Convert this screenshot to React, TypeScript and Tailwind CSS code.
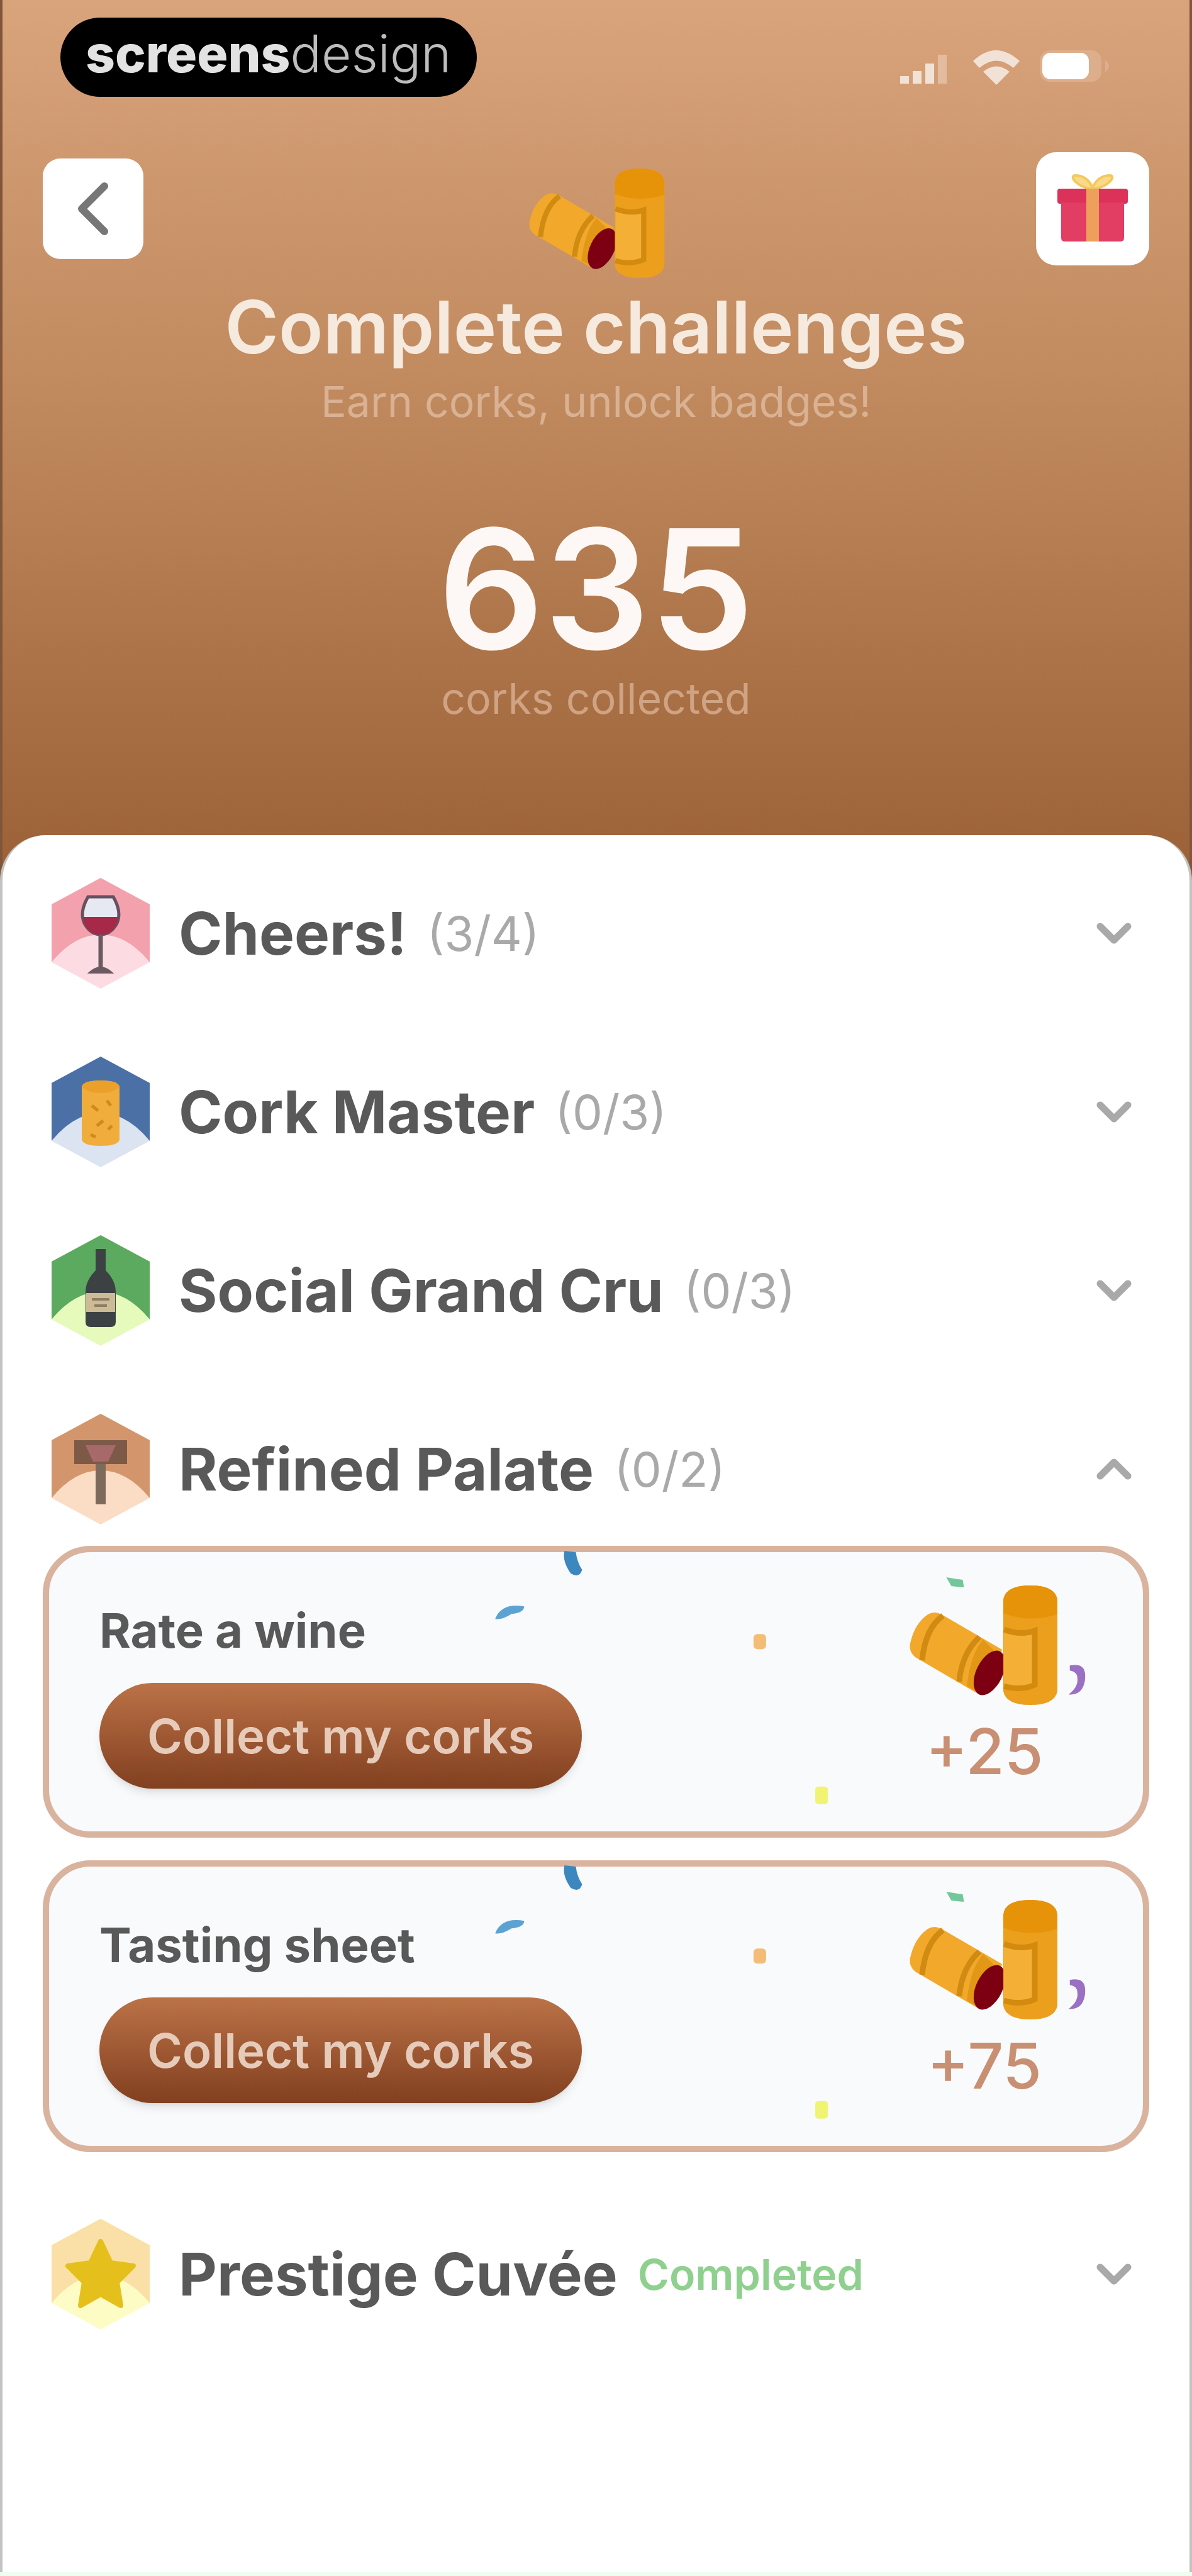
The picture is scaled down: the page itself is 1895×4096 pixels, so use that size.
import { ChevronDown, ChevronLeft, ChevronUp } from "lucide-react";
import type { ReactNode } from "react";

type Challenge = { title: string; reward: number };

type Category = {
  name: string;
  progress?: string;
  completed?: boolean;
  top: string;
  bottom: string;
  icon: ReactNode;
  challenges?: Challenge[];
};

function Corks({ className }: { className?: string }) {
  return (
    <svg viewBox="0 0 240 194" className={className} aria-hidden="true">
      {/* lying cork */}
      <path d="M30 48 Q10 62 3 90 Q-2 106 10 116 L106 172 Q122 178 134 156 L148 104 L52 48 Q40 42 30 48Z" fill="#f2a92b" />
      <path d="M54 50 Q26 70 21 121" fill="none" stroke="#d18a12" strokeWidth="9" />
      <path d="M112 84 Q84 110 80 155" fill="none" stroke="#d18a12" strokeWidth="9" />
      <path d="M118 88 Q98 110 92 162 L108 171 L142 112Z" fill="#e29716" />
      <ellipse cx="128" cy="141" rx="21" ry="38" transform="rotate(26 128 141)" fill="#7d0012" />
      {/* standing cork */}
      <path d="M150 26 Q152 2 193 2 Q234 2 236 26 V170 Q232 192 193 192 Q154 192 150 170Z" fill="#ec9f1c" />
      <path d="M150 56 V26 Q152 2 193 2 Q234 2 236 26 V48 Q190 62 150 46Z" fill="#e69309" />
      <path d="M151 74 Q176 84 198 76 V158 Q176 168 151 158Z" fill="#f4b036" />
      <path d="M151 72 Q178 82 200 74 V160 Q178 170 151 162" fill="none" stroke="#d38a0e" strokeWidth="9" />
    </svg>
  );
}

function Gift() {
  return (
    <svg viewBox="0 0 112 112" className="size-28" aria-hidden="true">
      <path d="M54 24 C32 22 18 4 28 3 C42 2 52 12 56 23 C60 12 70 2 84 3 C94 4 80 22 58 24" fill="#f9d98a" stroke="#f3c95c" strokeWidth="4" />
      <rect x="0" y="24" width="112" height="24" rx="4" fill="#dc3159" />
      <path d="M6 46 H106 V102 Q106 108 100 108 H12 Q6 108 6 102Z" fill="#e23d62" />
      <rect x="46" y="24" width="20" height="84" fill="#ef9f5c" />
    </svg>
  );
}

function Hexagon({ top, bottom, children }: { top: string; bottom: string; children: ReactNode }) {
  return (
    <svg viewBox="0 0 160 180" className="h-[180px] w-40 shrink-0" aria-hidden="true">
      <path d="M80 2 L158 44 V136 L80 178 L2 136 V44Z" fill={bottom} />
      <path d="M80 2 L158 44 V136 Q122 92 80 92 Q38 92 2 136 V44Z" fill={top} />
      {children}
    </svg>
  );
}

const glass = (
  <g>
    <path d="M60 32 H100 Q114 56 106 74 Q96 92 80 92 Q64 92 54 74 Q46 56 60 32Z" fill="#e6e8f2" stroke="#67505f" strokeWidth="5" />
    <path d="M52 64 H108 Q104 92 80 92 Q56 92 52 64Z" fill="#a8284a" />
    <path d="M80 92 V146" stroke="#6b5a62" strokeWidth="7" />
    <path d="M64 152 Q80 138 96 152Z" fill="#6b5a62" stroke="#6b5a62" strokeWidth="4" />
  </g>
);

const cork = (
  <g>
    <path d="M50 50 Q52 40 80 40 Q108 40 110 50 V134 Q108 144 80 144 Q52 144 50 134Z" fill="#f0ad3c" />
    <path d="M50 50 Q52 40 80 40 Q108 40 110 50 Q100 60 80 60 Q60 60 50 50Z" fill="#eba02a" />
    <path d="M66 80 L76 88 M90 72 L96 80 M84 104 L74 112 M92 118 L98 112 M64 126 L72 130" stroke="#cf8a1c" strokeWidth="5" />
  </g>
);

const bottle = (
  <g>
    <path d="M72 24 H88 V58 Q104 74 104 92 V140 Q104 148 96 148 H64 Q56 148 56 140 V92 Q56 74 72 58Z" fill="#3c4243" />
    <rect x="57" y="94" width="46" height="30" fill="#cdbb96" />
    <path d="M66 104 H94 M70 114 H90" stroke="#8d7c62" strokeWidth="4" />
  </g>
);

const tasting = (
  <g>
    <path d="M38 44 H122 V82 H38Z" fill="#7d5a48" />
    <path d="M56 52 H104 L92 78 H68Z" fill="#a8696a" />
    <path d="M80 82 V146" stroke="#7d6a5c" strokeWidth="16" />
  </g>
);

const star = (
  <path
    d="M80 38 L96 72 L132 77 L106 103 L112 140 L80 122 L48 140 L54 103 L28 77 L64 72Z"
    fill="#e5c01c"
    stroke="#e5c01c"
    strokeWidth="8"
    strokeLinejoin="round"
  />
);

const categories: Category[] = [
  { name: "Cheers!", progress: "(3/4)", top: "#f3a1ac", bottom: "#fcdce2", icon: glass },
  { name: "Cork Master", progress: "(0/3)", top: "#4a70a6", bottom: "#dce3f1", icon: cork },
  { name: "Social Grand Cru", progress: "(0/3)", top: "#5caa5f", bottom: "#e6fbbb", icon: bottle },
  {
    name: "Refined Palate",
    progress: "(0/2)",
    top: "#d3966c",
    bottom: "#fbdcc5",
    icon: tasting,
    challenges: [
      { title: "Rate a wine", reward: 25 },
      { title: "Tasting sheet", reward: 75 },
    ],
  },
  { name: "Prestige Cuvée", completed: true, top: "#fae0a6", bottom: "#fdfcc4", icon: star },
];

function Confetti() {
  return (
    <svg viewBox="0 0 1756 464" className="pointer-events-none absolute -inset-2.5" aria-hidden="true">
      <path d="M828 8 Q824 24 838 44 Q852 52 856 38 Q848 26 846 10Z" fill="#3d87bf" />
      <path d="M718 116 Q728 90 764 96 Q764 106 744 108 Q728 118 718 116Z" fill="#5ba3d3" />
      <path d="M1434 50 L1460 54 L1462 66 L1442 64Z" fill="#74c79a" />
      <rect x="1128" y="140" width="20" height="24" rx="6" fill="#f3bd77" />
      <rect x="1226" y="382" width="20" height="28" rx="5" fill="#f1f472" />
      <path d="M1630 190 Q1658 184 1654 214 Q1650 238 1628 236 Q1644 224 1642 210 Q1642 200 1630 198Z" fill="#9a70c4" />
    </svg>
  );
}

function ChallengeCard({ title, reward }: Challenge) {
  return (
    <li className="relative flex h-[464px] items-center justify-between rounded-[76px] border-10 border-[#d9b39e] bg-[#f9fafc] pr-[132px] pl-20">
      <Confetti />
      <div className="relative flex flex-col items-start gap-9 pt-2">
        <h3 className="text-[76px] leading-[96px] font-bold text-[#595959]">{title}</h3>
        <button
          type="button"
          className="h-[168px] rounded-full bg-linear-to-b from-[#bb7247] to-[#824020] px-[76px] text-[76px] font-semibold text-[#e6cbbb] shadow-lg"
        >
          Collect my corks
        </button>
      </div>
      <div className="relative flex flex-col items-center gap-3 pb-4">
        <Corks className="h-[194px] w-60" />
        <span className="text-[100px] leading-[120px] font-medium text-[#c98f73]">+{reward}</span>
      </div>
    </li>
  );
}

function CategorySection({ category }: { category: Category }) {
  const open = Boolean(category.challenges);
  const Chevron = open ? ChevronUp : ChevronDown;

  return (
    <section>
      <button type="button" aria-expanded={open} className="flex h-[180px] w-full items-center pr-3 pl-3 text-left">
        <Hexagon top={category.top} bottom={category.bottom}>
          {category.icon}
        </Hexagon>
        <span className="ml-11 text-[94px] font-bold text-[#595959]">{category.name}</span>
        {category.completed ? (
          <span className="ml-8 text-[68px] font-semibold text-[#8fd08f]">Completed</span>
        ) : (
          <span className="ml-8 text-[76px] text-[#a9a9a9]">{category.progress}</span>
        )}
        <Chevron className="ml-auto size-[88px] text-[#a9a9a9]" strokeWidth={3} />
      </button>
      {category.challenges && (
        <ul className="mt-8 flex flex-col gap-9">
          {category.challenges.map((c) => (
            <ChallengeCard key={c.title} {...c} />
          ))}
        </ul>
      )}
    </section>
  );
}

export default function App() {
  return (
    <div className="flex min-h-screen flex-col border-b-6 border-[#effdf0] bg-white font-[Inter,sans-serif]">
      <header className="border-x-4 border-[#80563a] bg-linear-to-b from-[#d9a37c] via-[#bd865a] to-[#9b6036] px-16 pt-7 pb-[244px]">
        <div className="flex h-[126px] items-center justify-between pr-14 pl-7">
          <div className="flex h-full items-center rounded-full bg-black px-10 pb-3 text-[82px] text-[#bdbdbd]">
            <span className="font-extrabold text-[#e2e2e2]">screens</span>
            <span className="font-light">design</span>
          </div>
          <svg viewBox="0 0 344 60" className="mt-7 h-[60px] w-[344px]" aria-hidden="true">
            <path d="M4 46 h14 v12 h-14z M24 38 h14 v20 h-14z M44 26 h14 v32 h-14z" fill="#f2e2d5" />
            <path d="M64 12 h14 v46 h-14z" fill="#e3bc9f" />
            <path d="M120 22 Q156 -12 194 22 L184 33 Q157 10 130 33Z M136 39 Q157 22 178 39 L157 60Z" fill="#f2e2d5" />
            <rect x="226" y="5" width="98" height="50" rx="16" fill="#ddae8b" />
            <rect x="230" y="9" width="74" height="42" rx="13" fill="#fff" />
            <path d="M330 20 Q342 30 330 40Z" fill="#ddae8b" />
          </svg>
        </div>

        <div className="mt-[88px] flex items-start justify-between">
          <button type="button" aria-label="Back" className="mt-2.5 flex size-40 items-center justify-center rounded-[28px] bg-white text-[#777777]">
            <ChevronLeft className="size-36" strokeWidth={2} />
          </button>
          <Corks className="mt-6 ml-6 h-[178px] w-[220px]" />
          <button type="button" aria-label="Rewards" className="flex size-[180px] items-center justify-center rounded-[32px] bg-white">
            <Gift />
          </button>
        </div>

        <div className="mt-1 flex flex-col items-center">
          <h1 className="text-[116px] leading-[144px] font-semibold text-[#f6e9de]">Complete challenges</h1>
          <p className="text-[68px] leading-[92px] text-[#d9b193]">Earn corks, unlock badges!</p>
          <p className="mt-[124px] text-[264px] leading-[256px] font-semibold text-[#fdf8f5]">635</p>
          <p className="text-[68px] leading-[92px] text-[#cfa383]">corks collected</p>
        </div>
      </header>

      <main className="-mt-[72px] flex grow flex-col gap-[104px] rounded-t-[72px] border-x-4 border-[#c2c4c1] bg-white px-16 pt-[66px]">
        {categories.map((category) => (
          <CategorySection key={category.name} category={category} />
        ))}
      </main>
    </div>
  );
}
